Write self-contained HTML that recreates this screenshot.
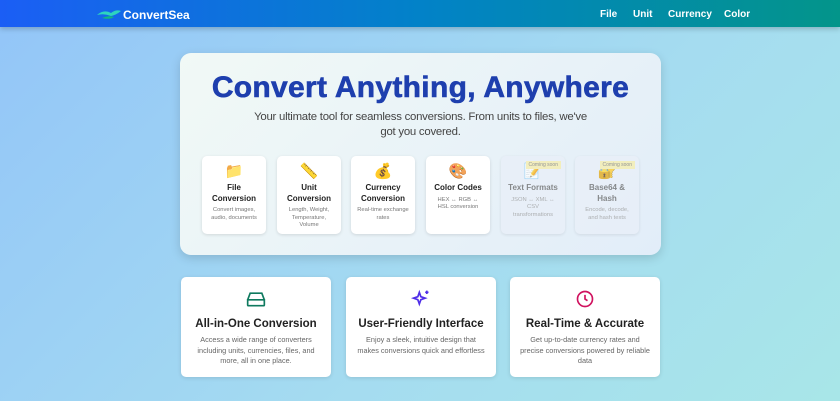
<!DOCTYPE html>
<html><head><meta charset="utf-8"><style>
*{margin:0;padding:0;box-sizing:border-box}
body{width:840px;height:401px;overflow:hidden;font-family:"Liberation Sans",sans-serif;background:linear-gradient(135deg,#93c5f8 0%,#a5dcf0 60%,#a8e6e8 100%);position:relative}
.hdr{position:absolute;left:0;top:0;width:840px;height:27px;background:linear-gradient(90deg,#1b5ef5,#0282c8 50%,#03958a);box-shadow:0 2px 5px rgba(0,0,0,.2)}
.logo{position:absolute;left:96px;top:7px;color:#fff;font-weight:bold;font-size:12px}
.logo svg{position:absolute;left:0;top:0}
.logo span{position:absolute;left:27px;top:1px;white-space:nowrap}
.nav{position:absolute;top:9px;color:#fff;font-weight:bold;font-size:10px}
.hero{position:absolute;left:180px;top:53px;width:481px;height:202px;border-radius:11px;background:linear-gradient(135deg,#f1f9f6,#e2edf9);box-shadow:0 3px 10px rgba(0,0,0,.15)}
h1{position:absolute;left:0;width:100%;top:18px;text-align:center;font-size:30px;color:#1e3fae;font-weight:bold;letter-spacing:.3px;-webkit-text-stroke:.6px #1e3fae}
.sub{position:absolute;left:0;width:481px;top:57px;text-align:center;font-size:11.4px;letter-spacing:-.25px;line-height:15px;color:#444;white-space:nowrap}
.c{position:absolute;top:156px;width:64px;height:78px;background:#fff;border-radius:5px;box-shadow:0 1px 3px rgba(0,0,0,.12);text-align:center}
.c.d{background:#e9eff8;opacity:.75}
.c .i{height:20px;margin-top:6px;font-size:15px;line-height:20px}
.c b{display:block;font-size:8px;line-height:10.5px;color:#222;margin-top:1px}
.c p{font-size:5.8px;line-height:7.5px;color:#777;margin-top:3px;padding:0 6px}
.c.d b{color:#666}.c.d p{color:#999}
.soon{position:absolute;right:4px;top:5px;background:#f7eeaa;color:#777;font-size:5px;padding:1px 3px}
.f{position:absolute;top:277px;width:150px;height:100px;background:#fff;border-radius:5px;box-shadow:0 1px 4px rgba(0,0,0,.12);text-align:center}
.f svg{display:block;margin:12px auto 0}
.f b{display:block;font-size:11.5px;color:#222;margin-top:9px}
.f p{font-size:7.3px;line-height:10.5px;color:#666;margin-top:5px;padding:0 10px}
</style></head><body>
<div class="hdr">
<div class="logo"><svg width="26" height="14" viewBox="0 0 26 14"><path d="M1 8 Q8 2 15 6 Q20 2 25 4 Q20 8 15 9 Q8 6 1 8Z" fill="#2dd4bf"/><path d="M6 11 Q12 8 18 10 Q14 13 6 11Z" fill="#10b981"/></svg><span>ConvertSea</span></div>
<div class="nav" style="left:600px">File</div>
<div class="nav" style="left:633px">Unit</div>
<div class="nav" style="left:668px">Currency</div>
<div class="nav" style="left:724px">Color</div>
</div>
<div class="hero"><h1>Convert Anything, Anywhere</h1><div class="sub">Your ultimate tool for seamless conversions. From units to files, we've<br>got you covered.</div></div>
<div class="c" style="left:202px"><div class="i">📁</div><b>File<br>Conversion</b><p>Convert images, audio, documents</p></div>
<div class="c" style="left:277px"><div class="i">📏</div><b>Unit<br>Conversion</b><p>Length, Weight, Temperature, Volume</p></div>
<div class="c" style="left:351px"><div class="i">💰</div><b>Currency<br>Conversion</b><p>Real-time exchange rates</p></div>
<div class="c" style="left:426px"><div class="i">🎨</div><b>Color Codes</b><p>HEX ↔ RGB ↔ HSL conversion</p></div>
<div class="c d" style="left:501px"><span class="soon">Coming soon</span><div class="i">📝</div><b>Text Formats</b><p>JSON ↔ XML ↔ CSV transformations</p></div>
<div class="c d" style="left:575px"><span class="soon">Coming soon</span><div class="i">🔐</div><b>Base64 &amp;<br>Hash</b><p>Encode, decode, and hash texts</p></div>
<div class="f" style="left:181px"><svg width="22" height="20" viewBox="0 0 24 24" fill="none" stroke="#0f7a5f" stroke-width="2"><path d="M2 13h20v6a1 1 0 0 1-1 1H3a1 1 0 0 1-1-1z M2 13l3-8h14l3 8"/><path d="M6 16.5h.01M10 16.5h.01"/></svg><b>All-in-One Conversion</b><p>Access a wide range of converters including units, currencies, files, and more, all in one place.</p></div>
<div class="f" style="left:346px"><svg width="22" height="20" viewBox="0 0 24 24" fill="none" stroke="#4f2ee8" stroke-width="2"><path d="M10 4l1.8 5.2L17 11l-5.2 1.8L10 18l-1.8-5.2L3 11l5.2-1.8z"/><path d="M19 2v4M17 4h4M4 20h.01"/></svg><b>User-Friendly Interface</b><p>Enjoy a sleek, intuitive design that makes conversions quick and effortless</p></div>
<div class="f" style="left:510px"><svg width="22" height="20" viewBox="0 0 24 24" fill="none" stroke="#d0125f" stroke-width="2"><circle cx="12" cy="12" r="9"/><path d="M12 7v5l3 2"/></svg><b>Real-Time &amp; Accurate</b><p>Get up-to-date currency rates and precise conversions powered by reliable data</p></div>
</body></html>
